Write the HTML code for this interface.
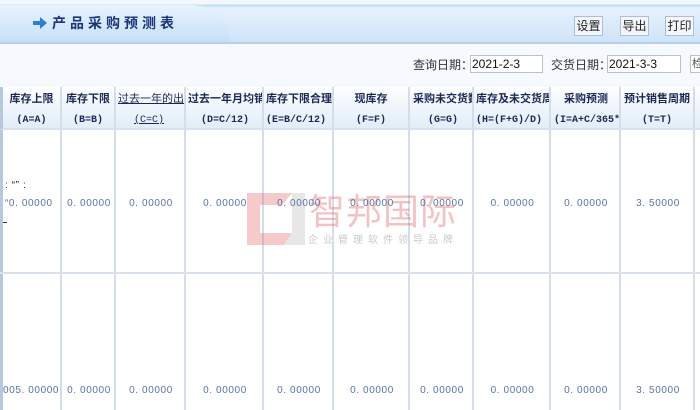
<!DOCTYPE html>
<html><head><meta charset="utf-8"><style>
*{margin:0;padding:0;box-sizing:border-box}
body{width:700px;height:410px;overflow:hidden;background:#f6f9fe;font-family:"Liberation Sans","Noto Sans CJK SC",sans-serif;position:relative}
.a{position:absolute}
.top{left:0;top:0;width:700px;height:44px;background:linear-gradient(#f3f8fe 0,#f3f8fe 4px,#bcdcf6 5px,#e6f1fc 8px,#d7e9fa 30px,#cfe4f8 42px);border-bottom:2px solid #b6d0ea}
.tab{left:0;top:5px;width:230px;height:37px;background:linear-gradient(#e8f3fd,#c6e0f8);border-top-right-radius:40px 37px}
.title{left:52px;top:13px;font-size:14px;color:#1c3478;letter-spacing:4px;font-family:"Liberation Sans","Noto Sans CJK SC",sans-serif;font-weight:bold}
.btn{top:16px;height:20px;border:1px solid #aebfd4;background:#f3f6fa;font-size:12px;color:#222;line-height:18px;text-align:center;width:29px}
.lbl{top:56px;font-size:12px;color:#333}
.inp{top:55px;height:18px;border:1px solid #b9c2cc;background:#fff;font-size:12px;color:#111;padding-left:1px;line-height:16px}
.th{top:87px;height:43px;background:linear-gradient(#fdfeff,#e2edf9);border-right:2px solid #d3deea;border-bottom:2px solid #d8e2ee;overflow:hidden;white-space:nowrap;font-weight:bold;color:#1b2855;font-size:11px;text-align:center;padding-top:2px}
.th div{height:21px;line-height:21px}
.th div+div{font-family:"Liberation Mono",monospace;font-size:10px}
.col{top:130px;height:280px;border-right:2px solid #d3deea;background:#fff}
.d{font-size:10px;color:#5a74aa;text-align:center;letter-spacing:.6px}
.hl{left:0;top:272px;width:700px;height:2px;background:#d8e0ec}
</style></head><body>
<div class="a top"></div>
<div class="a tab"></div>
<svg class="a" style="left:33px;top:17px" width="14" height="12"><path d="M0 4h7V0l7 6-7 6V8H0z" fill="#2f7fd0"/></svg>
<div class="a title">产品采购预测表</div>
<div class="a btn" style="left:574px">设置</div>
<div class="a btn" style="left:620px">导出</div>
<div class="a btn" style="left:665px">打印</div>
<div class="a lbl" style="left:413px">查询日期：</div>
<div class="a inp" style="left:470px;width:73px">2021-2-3</div>
<div class="a lbl" style="left:551px">交货日期：</div>
<div class="a inp" style="left:607px;width:74px">2021-3-3</div>
<div class="a inp" style="left:690px;width:14px;font-size:11px;color:#555">检</div>

<div class="a col" style="left:0;width:62px;border-left:3px solid #b8c8dc"></div>
<div class="a col" style="left:62px;width:54px"></div>
<div class="a col" style="left:116px;width:70px"></div>
<div class="a col" style="left:186px;width:78px"></div>
<div class="a col" style="left:264px;width:70px"></div>
<div class="a col" style="left:334px;width:76px"></div>
<div class="a col" style="left:410px;width:64px"></div>
<div class="a col" style="left:474px;width:77px"></div>
<div class="a col" style="left:551px;width:70px"></div>
<div class="a col" style="left:621px;width:74px"></div>
<div class="a col" style="left:695px;width:10px"></div>
<div class="a hl"></div>

<div class="a th" style="left:0;width:62px;border-left:3px solid #b8c8dc"><div>库存上限</div><div>(A=A)</div></div>
<div class="a th" style="left:62px;width:54px"><div>库存下限</div><div>(B=B)</div></div>
<div class="a th" style="left:116px;width:70px;text-align:left;padding-left:2px;font-weight:normal;text-decoration:underline"><div>过去一年的出库</div><div style="padding-left:16px">(C=C)</div></div>
<div class="a th" style="left:186px;width:78px;text-align:left;padding-left:2px"><div>过去一年月均销</div><div style="padding-left:13px">(D=C/12)</div></div>
<div class="a th" style="left:264px;width:70px;text-align:left;padding-left:2px"><div>库存下限合理</div><div>(E=B/C/12)</div></div>
<div class="a th" style="left:334px;width:76px"><div>现库存</div><div>(F=F)</div></div>
<div class="a th" style="left:410px;width:64px;text-align:left;padding-left:3px"><div>采购未交货数</div><div style="padding-left:15px">(G=G)</div></div>
<div class="a th" style="left:474px;width:77px;text-align:left;padding-left:2px"><div>库存及未交货周</div><div>(H=(F+G)/D)</div></div>
<div class="a th" style="left:551px;width:70px;text-align:left;padding-left:3px"><div style="padding-left:10px">采购预测</div><div>(I=A+C/365*T)</div></div>
<div class="a th" style="left:621px;width:74px"><div>预计销售周期</div><div>(T=T)</div></div>
<div class="a th" style="left:695px;width:10px"></div>

<svg class="a" style="left:247px;top:193px;opacity:.35" width="58" height="52"><path d="M0 0h45l-10 12H13v28h32l-8 12H0z" fill="#e06a6a"/><path d="M45 0l13 0v52H37l8-12V12z" fill="#bbb"/></svg>
<div class="a" style="left:309px;top:189px;font-size:36px;color:rgba(220,80,80,.35);letter-spacing:1px;line-height:40px;font-family:'Noto Sans CJK SC',sans-serif">智邦国际</div>
<div class="a" style="left:308px;top:231px;font-size:10px;color:rgba(150,150,150,.5);letter-spacing:5px">企业管理软件领导品牌</div>

<div class="a d" style="left:5px;top:180px;font-size:10px;color:#223">: “” :</div>
<div class="a d" style="left:5px;top:198px;color:#5a74aa">“0. 00000</div>
<div class="a" style="left:3px;top:222px;width:4px;height:1px;background:#334"></div>
<div class="a d" style="left:62px;top:198px;width:54px">0. 00000</div>
<div class="a d" style="left:116px;top:198px;width:70px">0. 00000</div>
<div class="a d" style="left:186px;top:198px;width:78px">0. 00000</div>
<div class="a d" style="left:264px;top:198px;width:70px">0. 00000</div>
<div class="a d" style="left:334px;top:198px;width:76px">0. 00000</div>
<div class="a d" style="left:410px;top:198px;width:64px">0. 00000</div>
<div class="a d" style="left:474px;top:198px;width:77px">0. 00000</div>
<div class="a d" style="left:551px;top:198px;width:70px">0. 00000</div>
<div class="a d" style="left:621px;top:198px;width:74px">3. 50000</div>

<div class="a d" style="left:3px;top:385px">005. 00000</div>
<div class="a d" style="left:62px;top:385px;width:54px">0. 00000</div>
<div class="a d" style="left:116px;top:385px;width:70px">0. 00000</div>
<div class="a d" style="left:186px;top:385px;width:78px">0. 00000</div>
<div class="a d" style="left:264px;top:385px;width:70px">0. 00000</div>
<div class="a d" style="left:334px;top:385px;width:76px">0. 00000</div>
<div class="a d" style="left:410px;top:385px;width:64px">0. 00000</div>
<div class="a d" style="left:474px;top:385px;width:77px">0. 00000</div>
<div class="a d" style="left:551px;top:385px;width:70px">0. 00000</div>
<div class="a d" style="left:621px;top:385px;width:74px">3. 50000</div>
</body></html>
